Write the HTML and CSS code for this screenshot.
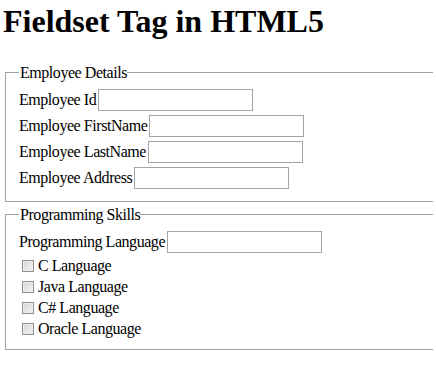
FILE: index.html
```html
<!DOCTYPE html>
<html lang="en">

<head>
    <meta charset="UTF-8">
    <meta name="viewport" content="width=device-width, initial-scale=1.0">
    <title>Fieldset Tag in HTML5</title>
    <link rel="stylesheet" href="styles.css">
</head>

<body>
    <h1>Fieldset Tag in HTML5</h1>
    <form>
        <fieldset>
            <legend>Employee Details</legend>
            <div class="row">
                <label for="emp_id">Employee Id</label>
                <input type="text" id="emp_id" name="emp_id">
            </div>
            <div class="row">
                <label for="emp_first">Employee FirstName</label>
                <input type="text" id="emp_first" name="emp_first">
            </div>
            <div class="row">
                <label for="emp_last">Employee LastName</label>
                <input type="text" id="emp_last" name="emp_last">
            </div>
            <div class="row">
                <label for="emp_address">Employee Address</label>
                <input type="text" id="emp_address" name="emp_address">
            </div>
        </fieldset>

        <fieldset class="skills">
            <legend>Programming Skills</legend>
            <div class="row">
                <label for="prog_lang">Programming Language</label>
                <input type="text" id="prog_lang" name="prog_lang">
            </div>
            <label class="check"><input type="checkbox" name="lang" value="c">C Language</label>
            <label class="check"><input type="checkbox" name="lang" value="java">Java Language</label>
            <label class="check"><input type="checkbox" name="lang" value="csharp">C# Language</label>
            <label class="check"><input type="checkbox" name="lang" value="oracle">Oracle Language</label>
        </fieldset>
    </form>
</body>

</html>
```

FILE: styles.css
```css
html, body {
    overflow: hidden;
}

body {
    font-family: "Liberation Serif", "Times New Roman", serif;
    font-size: 16px;
    letter-spacing: -0.45px;
    color: #000;
    background: #fff;
    margin: 3px;
}

h1 {
    font-size: 32px;
    font-weight: bold;
    letter-spacing: 0;
    margin: 0 0 24px 0;
    line-height: 37px;
}

fieldset {
    margin: 0 -40px 0 2px;
    padding: 6px 13px 10px 13px;
    border: 1px solid #a0a0a0;
}

fieldset.skills {
    margin-top: 4px;
}

legend {
    padding: 0 0 0 1px;
    line-height: 17px;
}

.row {
    display: flex;
    align-items: center;
    height: 26px;
}

.row input {
    width: 155px;
    height: 22px;
    margin: 0 0 0 2px;
    padding: 1px 3px;
    border: 1px solid #a5a5a5;
    box-sizing: border-box;
    font-size: 13px;
}

.check {
    display: flex;
    align-items: center;
    height: 21px;
}

.check input {
    appearance: none;
    -webkit-appearance: none;
    width: 12px;
    height: 12px;
    margin: 0 4px 0 3px;
    border: 1px solid #8f8f8f;
    background: linear-gradient(135deg, #d4d4d4, #f4f4f4);
    box-shadow: inset 0 0 0 1px #ececec;
    box-sizing: border-box;
}
```
